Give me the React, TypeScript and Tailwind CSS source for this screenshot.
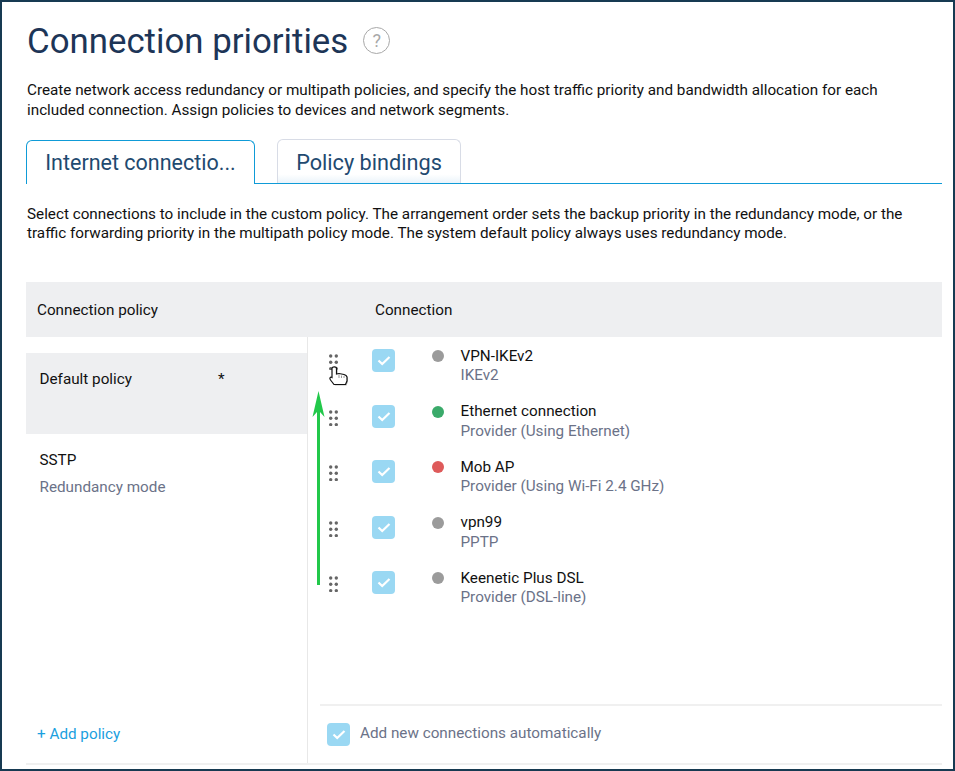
import React from "react";

const rows = [
  { name: "VPN-IKEv2", sub: "IKEv2", dot: "bg-[#9b9b9b]" },
  { name: "Ethernet connection", sub: "Provider (Using Ethernet)", dot: "bg-[#3aaa6a]" },
  { name: "Mob AP", sub: "Provider (Using Wi-Fi 2.4 GHz)", dot: "bg-[#de5a5a]" },
  { name: "vpn99", sub: "PPTP", dot: "bg-[#9b9b9b]" },
  { name: "Keenetic Plus DSL", sub: "Provider (DSL-line)", dot: "bg-[#9b9b9b]" },
];

function Check() {
  return (
    <span className="flex h-[23px] w-[23px] shrink-0 items-center justify-center rounded-[4px] bg-[#9ad8f3]">
      <svg width="14" height="11" viewBox="0 0 14 11" fill="none">
        <path d="M1.5 5.5 L5.2 9 L12.5 2" stroke="#fff" strokeWidth="2.2" />
      </svg>
    </span>
  );
}

function Grip() {
  return (
    <svg width="9" height="16" viewBox="0 0 9 16" className="shrink-0" fill="#666">
      {[2, 8.3, 14.6].map((y) => (
        <React.Fragment key={y}>
          <circle cx="1.7" cy={y} r="1.7" />
          <circle cx="7.3" cy={y} r="1.7" />
        </React.Fragment>
      ))}
    </svg>
  );
}

export default function App() {
  return (
    <div className="relative flex h-[771px] w-[955px] flex-col overflow-hidden border-2 border-[#173a52] bg-white pl-[24px] pr-[11px] font-['Roboto',sans-serif] text-[15.25px] leading-[19.5px] text-[#111]">
      <div className="flex h-[76px] items-center pt-[2px] pl-[1px]">
        <h1 className="text-[34.8px] leading-[44px] text-[#1d3557]">Connection priorities</h1>
        <span className="ml-[15px] -mt-[1px] flex h-[27px] w-[27px] items-center justify-center rounded-full border border-[#a8a8a8] text-[18px] text-[#a8a8a8]">?</span>
      </div>
      <p className="mt-[2px] h-[60px] pl-[1px] pr-[40px] leading-[20px]">
        Create network access redundancy or multipath policies, and specify the host traffic priority and bandwidth allocation for each included connection. Assign policies to devices and network segments.
      </p>
      <div className="flex h-[44px] items-end gap-[22px] border-b border-[#0f9bd7] text-[#1f4a70]">
        <div className="-mb-px flex h-[44px] w-[229px] items-center justify-center rounded-t-[6px] border border-b-0 border-[#0f9bd7] bg-white pt-[1px] text-[21.5px]">Internet connectio...</div>
        <div className="flex h-[44px] w-[184px] items-center justify-center rounded-t-[6px] border border-b-0 border-[#d8dce6] bg-linear-to-b from-white from-[80%] to-[#eaf3fa] pt-[2px] text-[21.7px]">Policy bindings</div>
      </div>
      <p className="mt-[21px] h-[77px] pl-[1px] leading-[19px]">
        Select connections to include in the custom policy. The arrangement order sets the backup priority in the redundancy mode, or the traffic forwarding priority in the multipath policy mode. The system default policy always uses redundancy mode.
      </p>
      <div className="flex h-[55px] items-center bg-[#eeeff1] pt-[2px]">
        <div className="w-[349px] pl-[11px]">Connection policy</div>
        <div>Connection</div>
      </div>
      <div className="flex flex-1 border-b-2 border-[#f0f0f0]">
        <div className="flex w-[282px] flex-col border-r border-[#e8e8e8] pt-[16px]">
          <div className="flex h-[81px] bg-[#eeeff1] pl-[13.5px] pt-[17px]">
            <span className="w-[178.5px]">Default policy</span>
            <span>*</span>
          </div>
          <div className="pl-[13.5px] pt-[17px]">
            <div>SSTP</div>
            <div className="mt-[7px] text-[#6b7288]">Redundancy mode</div>
          </div>
          <button className="mt-auto mb-[19px] pl-[11px] text-left text-[#1aa0e0]">+ Add policy</button>
        </div>
        <div className="flex flex-1 flex-col pl-[12px]">
          <div className="flex-1 pt-[9px]">
            {rows.map((r) => (
              <div key={r.name} className="flex h-[55.5px] items-start">
                <div className="mt-[8px] ml-[9px] w-[43px]"><Grip /></div>
                <div className="mt-[3px]"><Check /></div>
                <span className={`ml-[37px] mt-[4px] h-[12px] w-[12px] rounded-full ${r.dot}`} />
                <div className="ml-[16.5px] mt-[0.5px]">
                  <div>{r.name}</div>
                  <div className="text-[#6b7288]">{r.sub}</div>
                </div>
              </div>
            ))}
          </div>
          <div className="flex h-[59px] items-center gap-[10px] border-t-2 border-[#f0f0f0] pl-[7px] pb-[1px] text-[#6b7288]">
            <Check />
            <span>Add new connections automatically</span>
          </div>
        </div>
      </div>
      <div className="h-[4px]" />
      <svg className="absolute left-[309px] top-[388px]" width="14" height="196" viewBox="0 0 14 196" fill="none">
        <path d="M7.5 1 L13.5 27 L9 22 L9 195 L6 195 L6 22 L1.5 27 Z" fill="#22c84a" />
      </svg>
      <svg className="absolute left-[326px] top-[364px]" width="22" height="20" viewBox="0 0 22 20">
        <path d="M4 2.5 C4 .2 8.5 .2 8.5 2.5 V8 L11 7.5 L13.5 8 L16 8.5 L18 9.5 L19 11 V15 L17.5 18.5 H6 L2.5 14 C1 12 2.5 10.5 4 11.5 Z" fill="#bdbdbd" transform="translate(1 1)" />
        <path d="M4 2.5 C4 .2 8.5 .2 8.5 2.5 V8 L11 7.5 L13.5 8 L16 8.5 L18 9.5 L19 11 V15 L17.5 18.5 H6 L2.5 14 C1 12 2.5 10.5 4 11.5 Z" fill="#fff" stroke="#111" strokeWidth="1.2" />
        <path d="M11 9 V12 M13.5 9.5 V12 M16 10 V12" stroke="#999" strokeWidth="1" />
      </svg>
    </div>
  );
}
